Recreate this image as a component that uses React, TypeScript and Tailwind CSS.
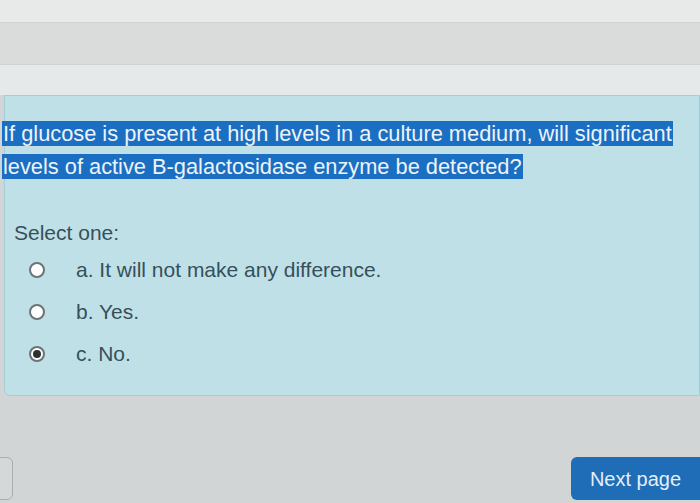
import { useState } from "react";

const options = [
  { id: "a", label: "a. It will not make any difference." },
  { id: "b", label: "b. Yes." },
  { id: "c", label: "c. No." },
];

const App = () => {
  const [selected, setSelected] = useState("c");

  return (
    <div className="w-[700px] h-[503px] overflow-hidden flex flex-col bg-[#d1d5d5] font-['Liberation_Sans',Arial,sans-serif]">
      {/* Top bands */}
      <div className="h-[22px] bg-[#e8eaea]" />
      <div className="h-[43px] bg-[#d9dcdb] border-y border-[#d0d3d3]" />
      <div className="h-[30px] bg-[#e6e9e9]" />

      {/* Question panel */}
      <div className="ml-[4px] h-[301px] bg-[#c0e0e7] border border-[#a7ccd5] rounded-bl-md pt-[22px]">
        <p className="text-[21.8px] leading-[32.5px] -ml-[3px] text-[#eef3f8] whitespace-nowrap">
          <span className="bg-[#1b6fc2] box-decoration-clone px-[1px]">
            If glucose is present at high levels in a culture medium, will significant
            <br />
            levels of active B-galactosidase enzyme be detected?
          </span>
        </p>

        <div className="mt-[38px] pl-[9px] text-[#35505b]">
          <div className="text-[21px] leading-[24px]">Select one:</div>
          <div className="mt-[13px] flex flex-col gap-[18px]">
            {options.map((o) => (
              <label
                key={o.id}
                className="flex items-center cursor-pointer"
                onClick={() => setSelected(o.id)}
              >
                <span className="ml-[15px] w-[16px] h-[16px] rounded-full border-2 border-[#6b7475] bg-white flex items-center justify-center">
                  {selected === o.id && <span className="w-[8px] h-[8px] rounded-full bg-[#2b3133]" />}
                </span>
                <span className="ml-[31px] text-[21px] leading-[24px]">{o.label}</span>
              </label>
            ))}
          </div>
        </div>
      </div>

      {/* Footer */}
      <div className="flex-1 flex items-end justify-between pb-[3px]">
        <div className="w-[17px] h-[43px] -ml-[4px] border border-[#a9adad] rounded-md bg-[#d4d8d8]" />
        <button className="w-[129px] h-[43px] rounded-l-md bg-[#1e6db6] text-[#e6eef7] text-[20px]">
          Next page
        </button>
      </div>
    </div>
  );
};

export default App;
